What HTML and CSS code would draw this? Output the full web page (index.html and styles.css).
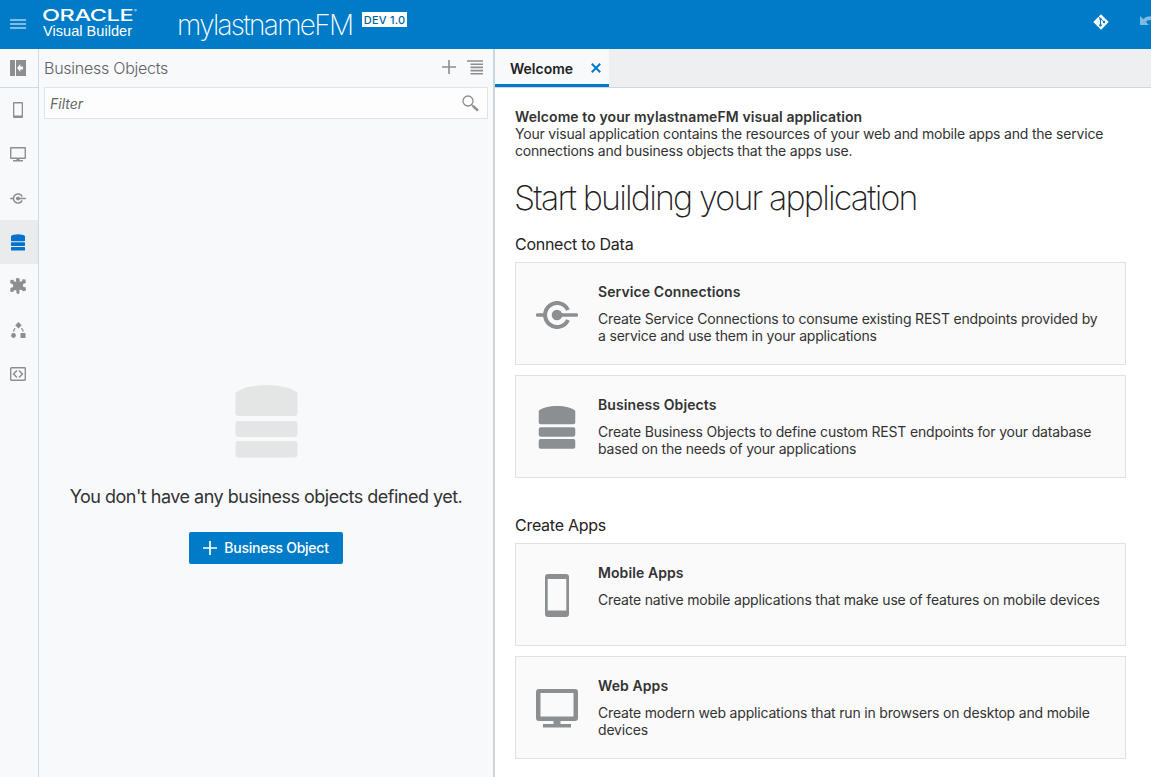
FILE: index.html
```html
<!DOCTYPE html>
<html lang="en">
<head>
<meta charset="utf-8">
<title>Visual Builder</title>
<link rel="stylesheet" href="styles.css">
</head>
<body>
<svg class="symbols" aria-hidden="true">
  <symbol id="database" viewBox="0 0 62 73">
    <path d="M0 8C5 3 18 0 31 0s26 3 31 8v20q0 3-3 3H3q-3 0-3-3z"/>
    <rect y="36" width="62" height="16" rx="3"/><rect y="56" width="62" height="16.500" rx="3"/>
  </symbol>
  <symbol id="service" viewBox="0 0 42 28">
    <path d="M32 9A12 12 0 1 0 32 19" fill="none" stroke="currentColor" stroke-width="4"/>
    <path d="M1.500 14H8M21 14H40.500" stroke="currentColor" stroke-width="3.400" stroke-linecap="round"/>
    <circle cx="21" cy="14" r="5.300"/>
  </symbol>
  <symbol id="phone" viewBox="0 0 24 43">
    <path fill-rule="evenodd" d="M3 0h18q3 0 3 3v37q0 3-3 3H3q-3 0-3-3V3q0-3 3-3zM2.700 5v31.500h18.600V5z"/>
  </symbol>
  <symbol id="monitor" viewBox="0 0 42 39">
    <path fill-rule="evenodd" d="M3 0h36q3 0 3 3v26q0 3-3 3H24.500v3H35v3.500H7V35h10.500v-3H3q-3 0-3-3V3q0-3 3-3zM4.500 4v23.500h33V4z"/>
  </symbol>
</svg>
<header class="header">
  <svg class="menu" viewBox="0 0 16 10"><path d="M0 1h16M0 5h16M0 9h16"/></svg>
  <div class="brand"><div class="oracle"><span>ORACLE</span><i>®</i></div><div class="product">Visual Builder</div></div>
  <h1 class="app-name">mylastnameFM</h1>
  <span class="version">DEV 1.0</span>
  <svg class="git" viewBox="0 0 16 16"><path class="diamond" d="M8 .3 15.700 8 8 15.700.3 8z"/><path class="branch" d="M5.400 2.600 7.500 4.700V11M7.800 5l3.200 3"/><circle cx="7.500" cy="4.900" r="1.200"/><circle cx="11" cy="8" r="1.200"/><circle cx="7.500" cy="11.300" r="1.300"/></svg>
  <svg class="undo" viewBox="0 0 16 10"><path d="M0 0v9h9L5.700 5.900Q10 1.800 16 7V3Q9-2.500 3.200 3z"/></svg>
</header>
<div class="workspace">
  <nav class="rail">
    <div class="rail-toggle"><svg width="16" height="16" viewBox="0 0 16 16"><path fill-rule="evenodd" d="M0 0h5v16H0zM6 0h10v16H6zM7 8l3.300-4v2.400H13v3.200h-2.700V12z"/></svg></div>
    <div class="rail-item"><svg width="10" height="16" viewBox="0 0 10 16"><path fill-rule="evenodd" d="M1 0h8q1 0 1 1v14q0 1-1 1H1q-1 0-1-1V1q0-1 1-1zM1.300 1.500v12h7.400v-12z"/></svg></div>
    <div class="rail-item"><svg width="16" height="15" viewBox="0 0 16 15"><path fill-rule="evenodd" d="M1 0h14q1 0 1 1v10q0 1-1 1H9.500v1H13v1.500H3V13h3.500v-1H1q-1 0-1-1V1q0-1 1-1zM1.400 1.400v9.200h13.200V1.400z"/></svg></div>
    <div class="rail-item"><svg width="16" height="11"><use href="#service"/></svg></div>
    <div class="rail-item active"><svg width="14" height="17" viewBox="0 0 14 17"><path d="M0 2Q2 .3 7 .3T14 2v4.500q0 .7-.7.7H.7Q0 7.200 0 6.500z"/><rect y="8.300" width="14" height="3.600" rx=".6"/><rect y="13" width="14" height="3.600" rx=".6"/></svg></div>
    <div class="rail-item"><svg width="16" height="16" viewBox="0 0 16 16"><path d="M6.400 3.500C5.200 1.600 6 .1 7.800.1S10.200 1.700 9.500 3.400q1.700.3 2.700-.3L12.400 1.300l3.100.2.300 3.400-2.300.8q-1.200 1.600 0 3.200l2.300.4v3.400l-3 .5-.9-1.200q-1.400-.6-2.700.3.800 2.500-.7 3.700-2.200.1-2.200-1.900l.2-1.700q-1.400-.8-2.700 0l-.7 1.500-2.800-.2.100-3.700 2.300-.7q1.100-1.500 0-3L.2 5.300.4 1.900l3-.2.5 1.500q1.100.7 2.500.3z"/></svg></div>
    <div class="rail-item"><svg width="15" height="16" viewBox="0 0 15 16"><path d="M7.500 0 10.700 3.200 7.500 6.500 4.200 3.200zM9.500 11h5v5h-5z"/><circle cx="2.500" cy="13.500" r="2.400"/><path d="M4 6.200 2.300 9.500M10.500 6.200l2 3.300" fill="none" stroke="currentColor" stroke-width="1.300"/></svg></div>
    <div class="rail-item"><svg width="16" height="14" viewBox="0 0 16 14"><rect x=".7" y=".7" width="14.600" height="12.600" rx=".7" fill="none" stroke="currentColor" stroke-width="1.400"/><path d="M6.900 3.500 3.600 7l3.300 3.500M9.100 3.500 12.400 7l-3.300 3.500" fill="none" stroke="currentColor" stroke-width="1.500"/></svg></div>
  </nav>
  <aside class="panel">
    <div class="panel-head">
      <h2><span>Business Objects</span></h2>
      <svg class="add" width="14" height="14" viewBox="0 0 14 14"><path d="M7 0v14M0 7h14"/></svg>
      <svg class="list" width="16" height="15" viewBox="0 0 16 15"><path d="M0 1h16M3.500 4.200H16M3.500 7.400H16M3.500 10.600H16M3.500 13.800H16"/></svg>
    </div>
    <div class="filter"><span>Filter</span><svg width="17" height="17" viewBox="0 0 17 17"><circle cx="6" cy="6" r="5"/><path d="m9.500 9.500 1.700 1.700"/><path class="handle" d="m11 11 5 4.700"/></svg></div>
    <div class="empty">
      <svg class="empty-icon"><use href="#database"/></svg>
      <p><span>You don't have any business objects defined yet.</span></p>
      <button><svg width="14" height="14" viewBox="0 0 14 14"><path d="M7 0v14M0 7h14"/></svg><span>Business Object</span></button>
    </div>
  </aside>
  <main class="main">
    <div class="tabs"><div class="tab"><span>Welcome</span><svg width="10" height="10" viewBox="0 0 10 10"><path d="m.8.8 8.400 8.400M9.200.8.8 9.200"/></svg></div></div>
    <div class="content">
      <div class="intro"><b>Welcome to your mylastnameFM visual application</b><br>Your visual application contains the resources of your web and mobile apps and the service<br>connections and business objects that the apps use.</div>
      <h2 class="start"><span>Start building your application</span></h2>
      <h3>Connect to Data</h3>
      <section class="card"><svg class="card-icon" height="28"><use href="#service"/></svg><div><h4>Service Connections</h4><p>Create Service Connections to consume existing REST endpoints provided by<br>a service and use them in your applications</p></div></section>
      <section class="card"><svg class="card-icon" height="43"><use href="#database"/></svg><div><h4>Business Objects</h4><p>Create Business Objects to define custom REST endpoints for your database<br>based on the needs of your applications</p></div></section>
      <h3 class="apps">Create Apps</h3>
      <section class="card"><svg class="card-icon" height="43"><use href="#phone"/></svg><div><h4>Mobile Apps</h4><p>Create native mobile applications that make use of features on mobile devices</p></div></section>
      <section class="card"><svg class="card-icon" height="39"><use href="#monitor"/></svg><div><h4>Web Apps</h4><p>Create modern web applications that run in browsers on desktop and mobile<br>devices</p></div></section>
    </div>
  </main>
</div>
</body>
</html>
```

FILE: styles.css
```css
* { box-sizing: border-box; }
body { margin: 0; height: 777px; overflow: hidden; font: 14px/17px Inter, sans-serif; color: #333; white-space: nowrap; background: #fff; }
h1, h2, h3, h4, p { margin: 0; font-weight: 400; }
svg { display: block; fill: currentColor; flex: none; }
.symbols { display: none; }
.header { height: 49px; background: #007bc7; color: #fff; display: flex; align-items: flex-start; padding-left: 10px; overflow: hidden; }
.menu { width: 16px; height: 10px; margin-top: 19px; stroke: #a9d1eb; stroke-width: 1.6; }
.brand { width: 134px; margin-left: 17px; padding-top: 8px; }
.oracle { height: 15px; display: flex; font-size: 16px; line-height: 15px; font-weight: 500; }
.oracle span { display: block; width: 91px; transform: scaleX(1.47); transform-origin: left; letter-spacing: -.3px; margin-left: -1px; }
.oracle i { font: 4px/4px Inter, sans-serif; margin: 1px 0 0 1px; }
.product { font: 14.5px/17px "Liberation Sans", Arial, sans-serif; letter-spacing: .05px; }
.app-name { width: 175px; margin-top: 8px; font-size: 28px; line-height: 34px; font-weight: 250; letter-spacing: -1.7px; }
.version { width: 45px; height: 15px; margin: 12px 0 0 10px; background: #fff; color: #00679f; font-size: 11px; line-height: 16px; font-weight: 500; text-align: center; letter-spacing: .2px; }
.git { width: 16px; height: 16px; margin: 14px 31px 0 auto; }
.branch { fill: none; stroke: #007bc7; stroke-width: 1; }
.git circle { fill: #007bc7; }
.undo { width: 16px; height: 10px; margin: 16px -5px 0 0; color: #7bbbe1; }
.workspace { height: 728px; display: flex; }
.rail { width: 39px; flex: none; border-right: 1px solid #ccdce6; background: #f8f9fb; color: #8b8f92; }
.rail-toggle, .rail-item { height: 44px; padding-right: 2px; display: flex; align-items: center; justify-content: center; }
.rail-toggle { height: 39px; border-bottom: 1px solid #ccdce6; }
.active { background: #e9ebed; color: #0572ce; }
.panel { width: 456px; flex: none; border-right: 2px solid #ced6dc; background: #f8f9fb; padding: 0 5px; }
.panel-head { height: 38px; display: flex; align-items: center; color: #606265; padding-right: 5px; }
.panel-head h2 { font-size: 16px; line-height: 20px; font-weight: 300; margin-right: auto; letter-spacing: -.25px; }
.add, .list { fill: none; stroke: #8b8f92; stroke-width: 1.6; margin-top: -2px; }
.list { margin-left: 11px; }
.filter { height: 32px; width: 444px; background: #fdfdfd; border: 1px solid #dfe4e7; display: flex; align-items: center; justify-content: space-between; padding: 0 8px 0 5px; font-style: italic; color: #666; }
.filter svg { fill: none; stroke: #8b8f92; stroke-width: 1.3; }
.filter .handle { stroke-width: 2.5; }
.empty { display: flex; flex-direction: column; align-items: center; padding-top: 266px; }
.empty-icon { width: 63px; height: 73px; color: #e4e6e6; }
.empty p { font-size: 18px; line-height: 24px; margin-top: 27px; letter-spacing: -.5px; }
.empty button { width: 154px; height: 32px; margin-top: 23px; border: 0; border-radius: 2px; padding: 0 0 1px; background: #007bc7; color: #fff; font: 500 14px/17px Inter, sans-serif; letter-spacing: -.25px; display: flex; align-items: center; justify-content: center; gap: 7px; }
button svg { stroke: #fff; stroke-width: 1.7; }
.main { flex: 1; }
.tabs { height: 39px; background: #eeeff1; border-bottom: 1px solid #ced9df; display: flex; }
.tab { width: 114px; height: 38px; background: #f8f9fb; border-bottom: 3px solid #007bc7; padding: 4px 8px 0 15px; display: flex; align-items: center; justify-content: space-between; font-weight: 600; color: #222; }
.tab svg { stroke: #007bc7; stroke-width: 2; margin-top: -2px; }
.content { padding: 20px 25px 0 20px; }
.intro { letter-spacing: -.195px; }
.intro b { font-weight: 600; letter-spacing: .09px; }
.start { font-size: 34px; line-height: 40px; font-weight: 225; margin-top: 19px; letter-spacing: -1.82px; color: #222; }
.start span { margin-left: -1px; }
.content h3 { font-size: 16px; line-height: 20px; margin: 16px 0 8px; letter-spacing: -.27px; color: #222; }
.content h3.apps { margin-top: 37px; }
.card { height: 103px; margin-bottom: 10px; border: 1px solid #dfe1e2; background: #fafafa; display: flex; align-items: center; padding-left: 20px; }
.card-icon { width: 42px; color: #8b8f92; margin: 2px 20px 0 0; }
.card > div { align-self: flex-start; padding-top: 20px; }
.card h4 { font-weight: 600; margin-bottom: 10px; letter-spacing: .09px; }
.card p { letter-spacing: -.185px; }
```
